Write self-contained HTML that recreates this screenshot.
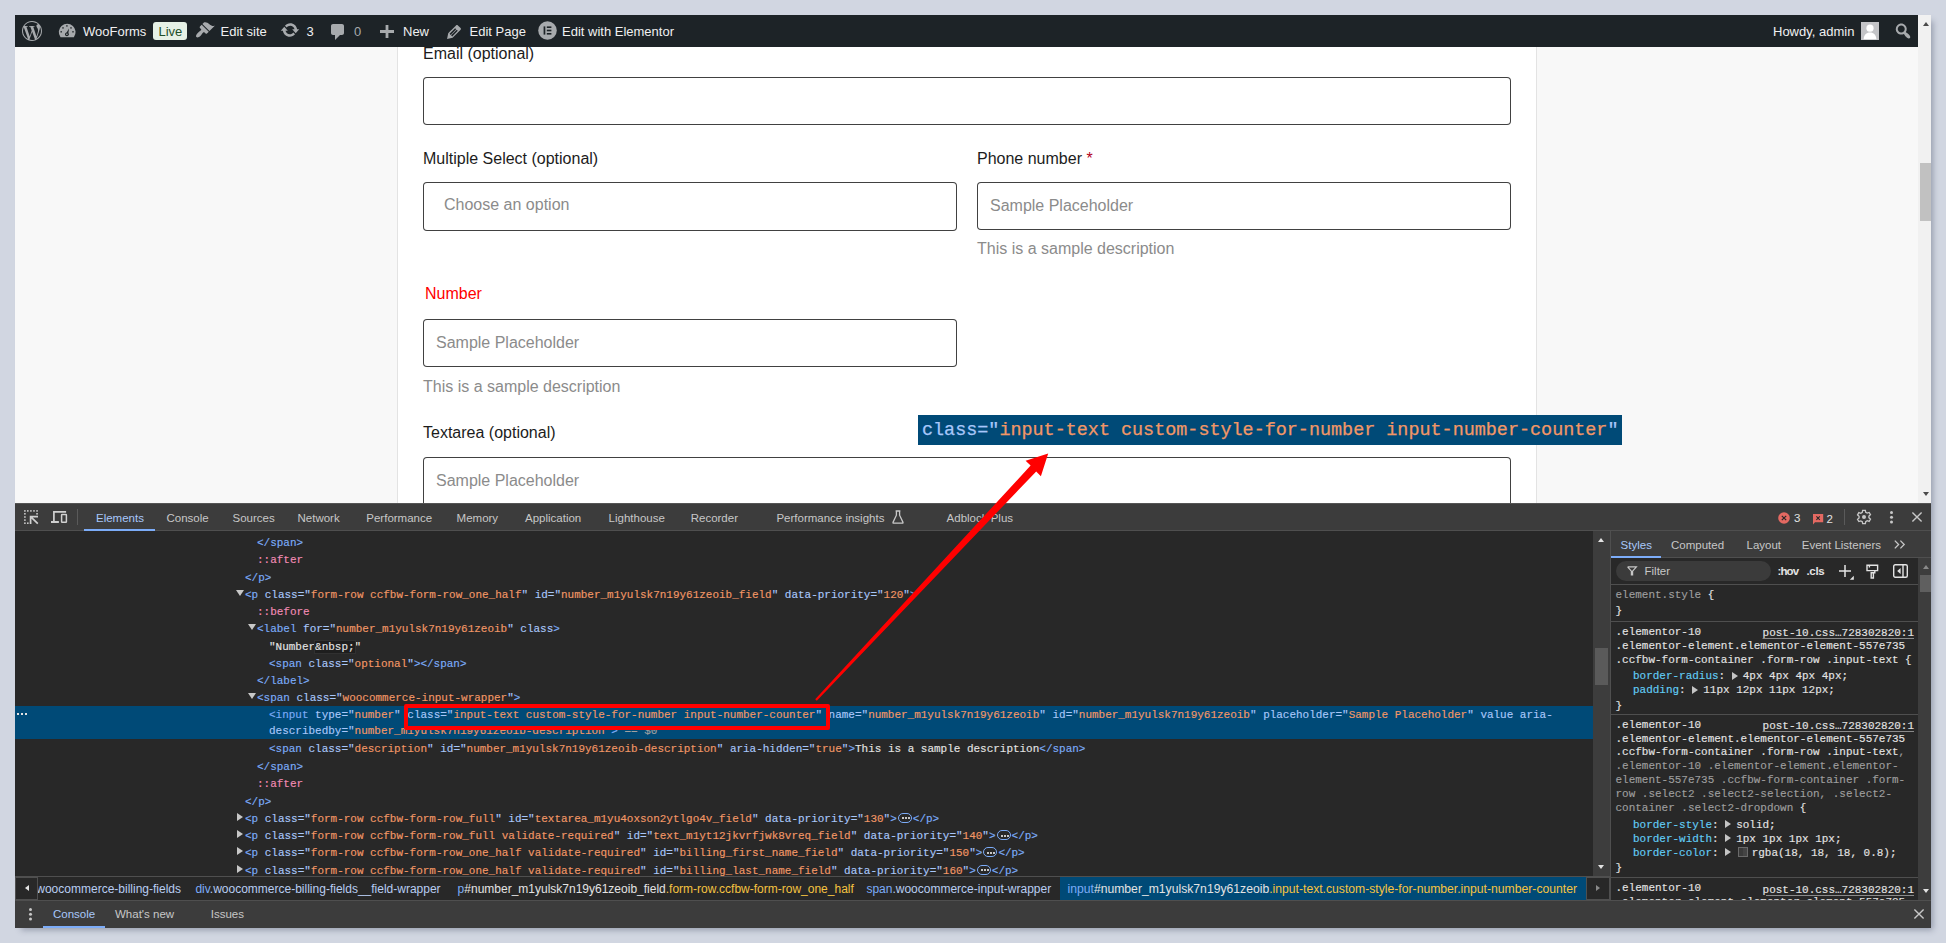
<!DOCTYPE html>
<html><head><meta charset="utf-8">
<style>
*{box-sizing:border-box;margin:0;padding:0}
html,body{width:1946px;height:943px;overflow:hidden;background:#d1d6e1;font-family:"Liberation Sans",sans-serif}
.a{position:absolute}
.t{position:absolute;white-space:pre;line-height:normal}
i{font-style:normal}
svg{position:absolute;overflow:visible}
#win{position:absolute;left:15px;top:15px;width:1916px;height:913px;overflow:hidden;background:#f8f8f8;box-shadow:4px 4px 6px -2px rgba(60,70,95,.4)}
#pg{position:absolute;left:-15px;top:-15px;width:1946px;height:943px}
.sans16{font-size:16px}
.inp{position:absolute;border:1px solid rgba(18,18,18,.8);border-radius:4px;background:#fff}
.lbl{color:#1c1c1c}
.ph{color:#8b8b8b}
.ab{font-size:13px;color:#f0f0f1}
.mono{font-family:"Liberation Mono",monospace;font-size:10.98px;color:#e3e3e3;-webkit-text-stroke:.15px}
.ui{font-size:11.5px;color:#c7c7c7}
.tg{color:#7cacf8}.an{color:#a8c7fa}.av{color:#f29766}.ps{color:#f28bb5}.tx{color:#e3e3e3}.eq{color:#a0a0a0}
.gr{color:#9e9e9e}.pn{color:#62cdf6}.wh{color:#e3e3e3}
.tri{position:absolute;width:0;height:0}
.tri.d{border-left:4px solid transparent;border-right:4px solid transparent;border-top:6px solid #c7c7c7}
.tri.r{border-top:4px solid transparent;border-bottom:4px solid transparent;border-left:6px solid #c7c7c7}
.dots{display:inline-block;position:relative;width:14px;height:10px;border:1px solid #7cacf8;border-radius:5px;vertical-align:-1px;margin:0 1px}
.dots:after{content:"";position:absolute;left:3px;top:3.5px;width:2px;height:2px;background:#c7c7c7;box-shadow:3px 0 0 #c7c7c7,6px 0 0 #c7c7c7}
.ln{position:absolute;background:#4f4f4f}
.stri{position:absolute;width:0;height:0;border-top:4px solid transparent;border-bottom:4px solid transparent;border-left:6px solid #c4c4c4}
</style></head><body>
<div id="win"><div id="pg">

<!-- ============ page area ============ -->
<div class="a" style="left:397px;top:47px;width:1px;height:456px;background:#e3e3e3"></div>
<div class="a" style="left:398px;top:47px;width:1138px;height:456px;background:#fff"></div>
<div class="a" style="left:1536px;top:47px;width:1px;height:456px;background:#e3e3e3"></div>

<div class="t sans16 lbl" style="left:423px;top:44.5px">Email (optional)</div>
<div class="inp" style="left:423px;top:77px;width:1088px;height:48px"></div>

<div class="t sans16 lbl" style="left:423px;top:149.5px">Multiple Select (optional)</div>
<div class="inp" style="left:423px;top:182px;width:534px;height:49px"></div>
<div class="t sans16 ph" style="left:444px;top:195.5px">Choose an option</div>

<div class="t sans16 lbl" style="left:977px;top:149.5px">Phone number <span style="color:#b3001b">*</span></div>
<div class="inp" style="left:977px;top:182px;width:534px;height:48px"></div>
<div class="t sans16 ph" style="left:990px;top:196.5px">Sample Placeholder</div>
<div class="t sans16 ph" style="left:977px;top:240px">This is a sample description</div>

<div class="t sans16" style="left:425px;top:284.5px;color:#f00">Number</div>
<div class="inp" style="left:423px;top:319px;width:534px;height:48px"></div>
<div class="t sans16 ph" style="left:436px;top:334.3px">Sample Placeholder</div>
<div class="t sans16 ph" style="left:423px;top:377.5px">This is a sample description</div>

<div class="t sans16 lbl" style="left:423px;top:423.7px">Textarea (optional)</div>
<div class="inp" style="left:423px;top:457px;width:1088px;height:80px"></div>
<div class="t sans16 ph" style="left:436px;top:471.5px">Sample Placeholder</div>

<!-- page scrollbar -->
<div class="a" style="left:1918px;top:47px;width:13px;height:456px;background:#f1f1f1"></div>
<div class="a" style="left:1920px;top:163px;width:11px;height:58px;background:#c1c1c1"></div>
<div class="tri" style="left:1923px;top:491.8px;border-left:3.6px solid transparent;border-right:3.6px solid transparent;border-top:4.2px solid #4a4a4a"></div>

<!-- ============ admin bar ============ -->
<div class="a" style="left:15px;top:15px;width:1903px;height:32px;background:#1d2327"></div>
<div class="a" style="left:1918px;top:15px;width:13px;height:32px;background:#f1f1f1"></div>
<div class="tri" style="left:1923px;top:22px;border-left:3.6px solid transparent;border-right:3.6px solid transparent;border-bottom:4.3px solid #4a4a4a"></div>
<!-- WP logo -->
<svg style="left:22px;top:21px" width="20" height="20" viewBox="0 0 24 24"><path fill="#a7aaad" d="M21.469 6.825c.84 1.537 1.318 3.3 1.318 5.175 0 3.979-2.156 7.456-5.363 9.325l3.295-9.527c.615-1.54.82-2.771.82-3.864 0-.405-.026-.78-.07-1.11m-7.981.105c.647-.03 1.232-.105 1.232-.105.582-.075.514-.93-.067-.899 0 0-1.755.135-2.88.135-1.064 0-2.85-.15-2.85-.15-.585-.03-.661.855-.075.885 0 0 .54.061 1.125.09l1.68 4.605-2.37 7.08L5.354 6.9c.649-.03 1.234-.1 1.234-.1.585-.075.516-.93-.065-.896 0 0-1.746.138-2.874.138-.2 0-.438-.008-.69-.015C4.911 3.15 8.235 1.215 12 1.215c2.809 0 5.365 1.072 7.286 2.833-.046-.003-.091-.009-.141-.009-1.06 0-1.812.923-1.812 1.914 0 .89.513 1.643 1.06 2.531.411.72.89 1.643.89 2.977 0 .915-.354 1.994-.821 3.479l-1.075 3.585-3.9-11.61.001.014zM12 22.784c-1.059 0-2.081-.153-3.048-.437l3.237-9.406 3.315 9.087c.024.053.05.101.078.149-1.12.393-2.325.609-3.582.609M1.211 12c0-1.564.336-3.05.935-4.39L7.29 21.709C3.694 19.96 1.212 16.271 1.211 12M12 0C5.385 0 0 5.385 0 12s5.385 12 12 12 12-5.385 12-12S18.615 0 12 0"/></svg>
<!-- dashboard gauge -->
<svg style="left:58px;top:23px" width="18" height="15" viewBox="0 0 18 15">
<path fill="#a7aaad" d="M2.53 14.2A8.4 8.4 0 1 1 15.87 14.2Z"/>
<g fill="#1d2327"><rect x="8.2" y="2.2" width="1.4" height="1.4"/><rect x="4.3" y="4.2" width="1.4" height="1.4"/><rect x="12.3" y="4.2" width="1.4" height="1.4"/><rect x="2.5" y="8.1" width="1.4" height="1.4"/><rect x="14.3" y="8.1" width="1.4" height="1.4"/>
<path d="M11 5.4L10.2 11.6 7.7 11z"/><circle cx="8.9" cy="11.3" r="1.9"/></g><circle cx="8.9" cy="11.3" r=".8" fill="#a7aaad"/>
</svg>
<div class="t ab" style="left:83px;top:23.7px">WooForms</div>
<div class="a" style="left:153px;top:22px;width:34px;height:18px;background:#e6f1e6;border-radius:3px"></div>
<div class="t ab" style="left:158.5px;top:23.7px;color:#1f4f2a">Live</div>
<!-- brush -->
<svg style="left:194.6px;top:20.4px" width="20" height="20" viewBox="0 0 20 20"><path fill="#a7aaad" d="M14.48 11.06L7.41 3.99l1.5-1.5c.5-.56 2.3-.47 3.51.32 1.21.8 1.43 1.28 2.91 2.1 1.18.64 2.45 1.26 4.450.85zm-.71.71L6.7 4.7 4.930 6.47c-.39.39-.39 1.02 0 1.42l1.06 1.060c.39.39.39 1.03 0 1.42-.6.6-1.43 1.11-2.21 1.69-.35.26-.7.53-1.010.84C1.43 14.23.4 16.08 1.4 17.07c.99 1 2.84-.03 4.18-1.36.31-.31.58-.66.85-1.02.57-.78 1.08-1.61 1.69-2.21.39-.39 1.02-.39 1.41 0l1.06 1.06c.39.39 1.02.39 1.41 0z"/></svg>
<div class="t ab" style="left:220.5px;top:23.7px">Edit site</div>
<!-- update -->
<svg style="left:280.4px;top:20.2px" width="20" height="20" viewBox="0 0 20 20"><path fill="#a7aaad" d="M10.2 3.28c3.53 0 6.43 2.61 6.92 6h2.08l-3.5 4-3.5-4h2.32c-.45-1.970-2.21-3.45-4.32-3.45-1.45 0-2.73.71-3.54 1.78L4.95 5.66C6.23 4.2 8.11 3.28 10.2 3.28zm-.4 13.44c-3.52 0-6.43-2.61-6.92-6H.8l3.5-4c1.17 1.33 2.33 2.67 3.5 4H5.48c.45 1.97 2.21 3.45 4.32 3.45 1.45 0 2.73-.71 3.54-1.78l1.71 1.95c-1.28 1.46-3.15 2.38-5.25 2.38z"/></svg>
<div class="t ab" style="left:306.5px;top:23.7px">3</div>
<!-- comment -->
<svg style="left:328px;top:22.2px" width="20" height="20" viewBox="0 0 20 20"><path fill="#a7aaad" d="M5 2h9c1.1 0 2 .9 2 2v7c0 1.1-.9 2-2 2h-2l-5 5v-5H5c-1.1 0-2-.9-2-2V4c0-1.1.9-2 2-2z"/></svg>
<div class="t ab" style="left:354px;top:23.7px;color:#a7aaad">0</div>
<!-- plus -->
<svg style="left:380px;top:24.5px" width="14" height="13" viewBox="0 0 14 13"><path fill="#a7aaad" d="M5.6 0h2.8v5.1H14v2.8H8.4V13H5.6V7.9H0V5.1h5.6z"/></svg>
<div class="t ab" style="left:403px;top:23.7px">New</div>
<!-- pencil -->
<svg style="left:443.6px;top:21.6px" width="20" height="20" viewBox="0 0 20 20"><path fill="#a7aaad" d="M13.89 3.39l2.71 2.72c.46.46.42 1.24.03 1.64l-8.01 8.02-5.56 1.16 1.16-5.58s7.6-7.63 7.99-8.03c.39-.39 1.22-.39 1.68.07zm-2.73 2.79l-5.59 5.61 1.11 1.11 5.54-5.65zm-2.97 8.23l5.58-5.6-1.07-1.08-5.59 5.6z"/></svg>
<div class="t ab" style="left:469.5px;top:23.7px">Edit Page</div>
<!-- elementor -->
<svg style="left:537.5px;top:21.2px" width="19" height="19" viewBox="0 0 19 19"><circle cx="9.5" cy="9.5" r="9.3" fill="#a7aaad"/><g fill="#1d2327"><rect x="5.6" y="5.4" width="1.7" height="8.2"/><rect x="8.8" y="5.4" width="4.6" height="1.6"/><rect x="8.8" y="8.7" width="4.6" height="1.6"/><rect x="8.8" y="12" width="4.6" height="1.6"/></g></svg>
<div class="t ab" style="left:562px;top:23.7px">Edit with Elementor</div>

<div class="t ab" style="left:1773px;top:23.7px">Howdy, admin</div>
<!-- avatar -->
<svg style="left:1861px;top:22px" width="18" height="18" viewBox="0 0 18 18"><rect width="18" height="18" fill="#c3c4c7"/><circle cx="9" cy="6.2" r="3.6" fill="#fff"/><path fill="#fff" d="M2.6 17.2c.2-4.2 2.8-6.8 6.4-6.8s6.2 2.6 6.4 6.8z"/></svg>
<!-- search -->
<svg style="left:1892.5px;top:20.8px" width="20" height="20" viewBox="0 0 20 20"><path fill="#a7aaad" d="M12.14 4.18c1.87 1.87 2.11 4.75.72 6.89.12.1.22.21.36.31.2.16.47.36.81.59.34.24.56.39.66.47.42.31.73.57.94.78.32.32.6.65.84 1 .25.35.44.69.59 1.04.14.35.21.68.18 1-.02.32-.14.59-.36.81s-.49.34-.81.36c-.31.02-.65-.04-.99-.19-.35-.14-.7-.34-1.040-.59-.35-.24-.68-.52-1-.84-.21-.21-.47-.52-.77-.93-.1-.13-.25-.35-.47-.66-.22-.32-.4-.57-.56-.78-.16-.2-.29-.35-.44-.5-2.07 1.09-4.69.76-6.44-.98-2.14-2.15-2.14-5.64 0-7.78 2.15-2.15 5.63-2.15 7.78 0zm-1.41 6.36c1.36-1.37 1.36-3.58 0-4.95-1.37-1.37-3.59-1.37-4.95 0-1.37 1.37-1.37 3.58 0 4.95 1.36 1.37 3.58 1.37 4.95 0z"/></svg>


<!-- ============ callout ============ -->
<div class="a" style="left:918px;top:415px;width:704px;height:30px;background:#004a77"></div>
<div class="t" style="left:922px;top:419.5px;font-family:'Liberation Mono',monospace;font-size:18.43px;-webkit-text-stroke:.25px"><i class="an">class="</i><i class="av">input-text custom-style-for-number input-number-counter</i><i class="an">"</i></div>

<!-- ============ devtools ============ -->
<div class="a" style="left:15px;top:503px;width:1916px;height:425px;background:#282828"></div>
<!-- main tab bar -->
<div class="a" style="left:15px;top:503px;width:1916px;height:27px;background:#3c3c3c"></div>
<div class="ln" style="left:15px;top:530px;width:1916px;height:1px"></div>
<div class="a" style="left:15px;top:503px;width:1916px;height:1px;background:#555"></div>
<!-- inspect icon -->
<svg style="left:23px;top:509px" width="17" height="17" viewBox="0 0 17 17"><g fill="#c7c7c7"><rect x="1.10" y="1.10" width="1.6" height="1.6"/><rect x="4.00" y="1.10" width="1.6" height="1.6"/><rect x="7.10" y="1.10" width="1.6" height="1.6"/><rect x="10.20" y="1.10" width="1.6" height="1.6"/><rect x="13.25" y="1.10" width="1.6" height="1.6"/><rect x="1.10" y="4.00" width="1.6" height="1.6"/><rect x="1.10" y="7.20" width="1.6" height="1.6"/><rect x="1.10" y="10.30" width="1.6" height="1.6"/><rect x="1.10" y="13.40" width="1.6" height="1.6"/><rect x="13.25" y="4.00" width="1.6" height="1.6"/><rect x="4.00" y="13.40" width="1.6" height="1.6"/></g>
<path fill="none" stroke="#d0d0d0" stroke-width="1.7" d="M7.6 14.9V7.6H15M7.6 7.6L14.8 14.6"/></svg>
<!-- device icon -->
<svg style="left:50px;top:510px" width="18" height="15" viewBox="0 0 18 15">
<path fill="none" stroke="#d0d0d0" stroke-width="1.7" d="M3.9 11.2V1.8H16.1"/><path fill="none" stroke="#d0d0d0" stroke-width="2" d="M1 12H8.9"/>
<rect x="11.6" y="4.6" width="4.8" height="7.7" rx=".5" fill="none" stroke="#d0d0d0" stroke-width="1.5"/>
</svg>
<div class="a" style="left:77px;top:509px;width:1px;height:16px;background:#5a5a5a"></div>
<div class="t ui" style="left:96px;top:511.6px;color:#a8c7fa">Elements</div>
<div class="a" style="left:84px;top:529px;width:71px;height:2px;background:#7cacf8"></div>
<div class="t ui" style="left:166.5px;top:511.6px">Console</div>
<div class="t ui" style="left:232.5px;top:511.6px">Sources</div>
<div class="t ui" style="left:297.5px;top:511.6px">Network</div>
<div class="t ui" style="left:366.3px;top:511.6px">Performance</div>
<div class="t ui" style="left:456.6px;top:511.6px">Memory</div>
<div class="t ui" style="left:525px;top:511.6px">Application</div>
<div class="t ui" style="left:608.6px;top:511.6px">Lighthouse</div>
<div class="t ui" style="left:690.7px;top:511.6px">Recorder</div>
<div class="t ui" style="left:776.4px;top:511.6px">Performance insights</div>
<svg style="left:892px;top:510px" width="12" height="14" viewBox="0 0 12 14"><path fill="none" stroke="#c7c7c7" stroke-width="1.3" d="M3.6 1h4.8M4.4 1v4.2L1 12.4c-.2.4 0 .8.5.8h9c.5 0 .7-.4.5-.8L7.6 5.2V1"/></svg>
<div class="t ui" style="left:946.6px;top:511.6px">Adblock Plus</div>
<!-- right icons -->
<svg style="left:1778px;top:512px" width="12" height="12" viewBox="0 0 12 12"><circle cx="6" cy="6" r="5.8" fill="#e46962"/><path stroke="#282828" stroke-width="1.2" d="M3.8 3.8l4.4 4.4M8.2 3.8l-4.4 4.4"/></svg>
<div class="t ui" style="left:1794px;top:511.6px;color:#e3e3e3">3</div>
<svg style="left:1813px;top:514px" width="11" height="11" viewBox="0 0 11 11"><path fill="#e46962" d="M0 0h10.2v8.2H2L0 10.4z"/><path stroke="#282828" stroke-width="1.1" d="M3.4 2.4l3.4 3.4M6.8 2.4L3.4 5.8"/></svg>
<div class="t ui" style="left:1826.5px;top:513.2px;color:#e3e3e3">2</div>
<div class="a" style="left:1844px;top:509px;width:1px;height:16px;background:#5a5a5a"></div>
<!-- gear -->
<svg style="left:1855.5px;top:509px" width="16" height="16" viewBox="0 0 24 24"><path fill="none" stroke="#c7c7c7" stroke-width="2" d="M10 2h4l.6 3 2.2 1.2 2.9-1 2 3.4-2.3 2v2.6l2.3 2-2 3.4-2.9-1L14.6 19l-.6 3h-4l-.6-3-2.2-1.2-2.9 1-2-3.4 2.3-2v-2.6l-2.3-2 2-3.4 2.9 1L9.4 5z"/><circle cx="12" cy="12" r="3" fill="#c7c7c7"/></svg>
<g></g>
<div class="a" style="left:1889.5px;top:511px;width:3px;height:3px;border-radius:2px;background:#c7c7c7;box-shadow:0 4.8px 0 #c7c7c7,0 9.6px 0 #c7c7c7"></div>
<svg style="left:1912px;top:512px" width="10" height="10" viewBox="0 0 10 10"><path stroke="#c7c7c7" stroke-width="1.4" d="M0.4 0.4l9.2 9.2M9.6 0.4L0.4 9.6"/></svg>

<!-- elements scrollbar -->
<div class="a" style="left:1593px;top:531px;width:17px;height:345px;background:#3d3d3d"></div>
<div class="tri" style="left:1598px;top:538px;border-left:3.6px solid transparent;border-right:3.6px solid transparent;border-bottom:4.4px solid #e3e3e3"></div>
<div class="a" style="left:1595px;top:648px;width:13px;height:37px;background:#5a5a5a"></div>
<div class="tri" style="left:1598px;top:865px;border-left:3.6px solid transparent;border-right:3.6px solid transparent;border-top:4.4px solid #e3e3e3"></div>
<div class="ln" style="left:1610px;top:531px;width:1px;height:369px"></div>

<!-- selected row -->
<div class="a" style="left:15px;top:706px;width:1578px;height:33px;background:#004a77"></div>
<div class="a" style="left:17px;top:713px;width:2px;height:2px;background:#e3e3e3;box-shadow:4px 0 0 #e3e3e3,8px 0 0 #e3e3e3"></div>
<!-- styles sidebar tabs -->
<div class="a" style="left:1611px;top:531px;width:320px;height:26px;background:#3c3c3c"></div>
<div class="ln" style="left:1611px;top:557px;width:320px;height:1px"></div>
<div class="t ui" style="left:1620.6px;top:538.6px;color:#a8c7fa">Styles</div>
<div class="a" style="left:1611px;top:556px;width:50px;height:2px;background:#7cacf8"></div>
<div class="t ui" style="left:1671px;top:538.6px">Computed</div>
<div class="t ui" style="left:1746.5px;top:538.6px">Layout</div>
<div class="t ui" style="left:1801.8px;top:538.6px">Event Listeners</div>
<svg style="left:1894px;top:540px" width="12" height="9" viewBox="0 0 12 9"><path fill="none" stroke="#c7c7c7" stroke-width="1.3" d="M0.8 0.6l3.8 3.9-3.8 3.9M6.4 0.6l3.8 3.9-3.8 3.9"/></svg>
<!-- toolbar -->
<div class="a" style="left:1616px;top:561px;width:155px;height:20px;border-radius:10px;background:#3b3b3b"></div>
<svg style="left:1627px;top:566px" width="10" height="10" viewBox="0 0 10 10"><path fill="none" stroke="#c7c7c7" stroke-width="1.2" d="M0.6 0.8h8.8L5.6 5.2v4.4M4.4 9.6V5.2L0.6 0.8"/></svg>
<div class="t ui" style="left:1644.5px;top:565.3px">Filter</div>
<div class="t ui" style="left:1777.5px;top:564.6px;color:#e3e3e3;font-weight:bold;letter-spacing:-.9px">:hov</div>
<div class="t ui" style="left:1806.4px;top:564.6px;color:#e3e3e3;font-weight:bold;letter-spacing:-.3px">.cls</div>
<svg style="left:1838px;top:564px" width="16" height="16" viewBox="0 0 16 16"><path stroke="#e3e3e3" stroke-width="1.5" d="M7 1v12M1 7h12"/><path fill="#e3e3e3" d="M15.8 11.8v4h-4z"/></svg>
<svg style="left:1866px;top:564px" width="13" height="15" viewBox="0 0 13 15"><path fill="none" stroke="#e3e3e3" stroke-width="1.4" d="M1 1.2h10.6v5.4H1zM3.4 1.2v2.4M8.8 6.6v2.2H5.2v5.2h2.2V8.8"/></svg>
<svg style="left:1893px;top:564px" width="15" height="14" viewBox="0 0 15 14"><rect x=".7" y=".7" width="13.6" height="12.6" rx="1.5" fill="none" stroke="#e3e3e3" stroke-width="1.4"/><path stroke="#e3e3e3" stroke-width="1.4" d="M10 .7v12.6"/><path fill="#e3e3e3" d="M7.6 4v6L4.2 7z"/></svg>
<div class="ln" style="left:1611px;top:584px;width:307px;height:1px"></div>
<!-- styles scrollbar -->
<div class="a" style="left:1918px;top:558px;width:13px;height:342px;background:#3d3d3d"></div>
<div class="tri" style="left:1923px;top:565px;border-left:3.6px solid transparent;border-right:3.6px solid transparent;border-bottom:4.2px solid #8a8a8a"></div>
<div class="a" style="left:1920px;top:575px;width:11px;height:17px;background:#5f5f5f"></div>
<div class="tri" style="left:1922.5px;top:888.8px;border-left:3.8px solid transparent;border-right:3.8px solid transparent;border-top:4.6px solid #e3e3e3"></div>

<!-- styles content -->
<div class="a" style="left:1611px;top:585px;width:307px;height:315px;overflow:hidden"><div class="a" style="left:-1611px;top:-585px;width:1946px;height:943px">
<div class="t mono" style="left:1615.5px;top:588.66px"><i class="gr">element.style</i> {</div>
<div class="t mono" style="left:1615.5px;top:604.76px">}</div>
<div class="ln" style="left:1611px;top:621px;width:307px;height:1px"></div>
<div class="t mono" style="left:1615.5px;top:625.56px">.elementor-10</div>
<div class="t mono" style="left:1762.6px;top:627.06px;text-decoration:underline;text-underline-offset:2px;text-decoration-color:#8a8a8a">post-10.css…728302820:1</div>
<div class="t mono" style="left:1615.5px;top:639.66px">.elementor-element.elementor-element-557e735</div>
<div class="t mono" style="left:1615.5px;top:653.86px">.ccfbw-form-container .form-row .input-text {</div>
<div class="t mono" style="left:1633px;top:670.06px"><i class="pn">border-radius</i>:<i style="display:inline-block;width:17.6px"></i>4px 4px 4px 4px;</div>
<div class="stri" style="left:1732px;top:671.5px"></div>
<div class="t mono" style="left:1633px;top:684.06px"><i class="pn">padding</i>:<i style="display:inline-block;width:17.6px"></i>11px 12px 11px 12px;</div>
<div class="stri" style="left:1692px;top:685.5px"></div>
<div class="t mono" style="left:1615.5px;top:699.56px">}</div>
<div class="ln" style="left:1611px;top:714px;width:307px;height:1px"></div>
<div class="t mono" style="left:1615.5px;top:718.86px">.elementor-10</div>
<div class="t mono" style="left:1762.6px;top:720.36px;text-decoration:underline;text-underline-offset:2px;text-decoration-color:#8a8a8a">post-10.css…728302820:1</div>
<div class="t mono" style="left:1615.5px;top:732.56px">.elementor-element.elementor-element-557e735</div>
<div class="t mono" style="left:1615.5px;top:746.26px">.ccfbw-form-container .form-row .input-text<i class="gr">,</i></div>
<div class="t mono gr" style="left:1615.5px;top:760.26px">.elementor-10 .elementor-element.elementor-</div>
<div class="t mono gr" style="left:1615.5px;top:774.26px">element-557e735 .ccfbw-form-container .form-</div>
<div class="t mono gr" style="left:1615.5px;top:788.36px">row .select2 .select2-selection, .select2-</div>
<div class="t mono" style="left:1615.5px;top:802.26px"><i class="gr">container .select2-dropdown</i> {</div>
<div class="t mono" style="left:1633px;top:818.66px"><i class="pn">border-style</i>:<i style="display:inline-block;width:17.6px"></i>solid;</div>
<div class="stri" style="left:1725px;top:820px"></div>
<div class="t mono" style="left:1633px;top:832.56px"><i class="pn">border-width</i>:<i style="display:inline-block;width:17.6px"></i>1px 1px 1px 1px;</div>
<div class="stri" style="left:1725px;top:834px"></div>
<div class="t mono" style="left:1633px;top:846.66px"><i class="pn">border-color</i>:<i style="display:inline-block;width:17.6px"></i><i style="display:inline-block;width:15.5px"></i>rgba(18, 18, 18, 0.8);</div>
<div class="stri" style="left:1725px;top:848px"></div>
<div class="a" style="left:1738px;top:847px;width:10px;height:10px;border:1px solid #6a6a6a;background:linear-gradient(90deg,#3a3a3a 50%,#444 50%)"></div>
<div class="t mono" style="left:1615.5px;top:862.16px">}</div>
<div class="ln" style="left:1611px;top:877px;width:307px;height:1px"></div>
<div class="t mono" style="left:1615.5px;top:882.06px">.elementor-10</div>
<div class="t mono" style="left:1762.6px;top:883.56px;text-decoration:underline;text-underline-offset:2px;text-decoration-color:#8a8a8a">post-10.css…728302820:1</div>
<div class="t mono" style="left:1615.5px;top:896.16px">.elementor-element.elementor-element-557e735</div>
</div></div>

<!-- elements content -->
<div class="a" style="left:15px;top:531px;width:1578px;height:345px;overflow:hidden"><div class="a" style="left:-15px;top:-531px;width:1946px;height:943px">
<div class="t mono" style="left:257px;top:537.16px"><i class="tg">&lt;/span&gt;</i></div>
<div class="t mono" style="left:257px;top:554.39px"><i class="ps">::after</i></div>
<div class="t mono" style="left:245px;top:571.62px"><i class="tg">&lt;/p&gt;</i></div>
<div class="tri d" style="left:235.5px;top:589.5px"></div>
<div class="t mono" style="left:245px;top:588.85px"><i class="tg">&lt;p</i> <i class="an">class</i><i class="an">="</i><i class="av">form-row ccfbw-form-row_one_half</i><i class="an">"</i> <i class="an">id</i><i class="an">="</i><i class="av">number_m1yulsk7n19y61zeoib_field</i><i class="an">"</i> <i class="an">data-priority</i><i class="an">="</i><i class="av">120</i><i class="an">"</i><i class="tg">&gt;</i></div>
<div class="t mono" style="left:257px;top:606.08px"><i class="ps">::before</i></div>
<div class="tri d" style="left:247.5px;top:623.9px"></div>
<div class="t mono" style="left:257px;top:623.31px"><i class="tg">&lt;label</i> <i class="an">for</i><i class="an">="</i><i class="av">number_m1yulsk7n19y61zeoib</i><i class="an">"</i> <i class="an">class</i><i class="tg">&gt;</i></div>
<div class="t mono" style="left:269px;top:640.54px"><i class="tx">"Number</i><i class="tx" style="background:#1e1e1e;outline:1px solid #303030">&amp;nbsp;</i><i class="tx">"</i></div>
<div class="t mono" style="left:269px;top:657.77px"><i class="tg">&lt;span</i> <i class="an">class</i><i class="an">="</i><i class="av">optional</i><i class="an">"</i><i class="tg">&gt;&lt;/span&gt;</i></div>
<div class="t mono" style="left:257px;top:675.00px"><i class="tg">&lt;/label&gt;</i></div>
<div class="tri d" style="left:247.5px;top:692.9px"></div>
<div class="t mono" style="left:257px;top:692.23px"><i class="tg">&lt;span</i> <i class="an">class</i><i class="an">="</i><i class="av">woocommerce-input-wrapper</i><i class="an">"</i><i class="tg">&gt;</i></div>
<div class="t mono" style="left:269px;top:709.46px"><i class="tg">&lt;input</i> <i class="an">type</i><i class="an">="</i><i class="av">number</i><i class="an">"</i> <i class="an">class</i><i class="an">="</i><i class="av">input-text custom-style-for-number input-number-counter</i><i class="an">"</i> <i class="an">name</i><i class="an">="</i><i class="av">number_m1yulsk7n19y61zeoib</i><i class="an">"</i> <i class="an">id</i><i class="an">="</i><i class="av">number_m1yulsk7n19y61zeoib</i><i class="an">"</i> <i class="an">placeholder</i><i class="an">="</i><i class="av">Sample Placeholder</i><i class="an">"</i> <i class="an">value aria-</i></div>
<div class="t mono" style="left:269px;top:725.49px"><i class="an">describedby="</i><i class="av">number_m1yulsk7n19y61zeoib-description</i><i class="an">"</i><i class="tg">&gt;</i><i class="eq"> == $0</i></div>
<div class="t mono" style="left:269px;top:742.72px"><i class="tg">&lt;span</i> <i class="an">class</i><i class="an">="</i><i class="av">description</i><i class="an">"</i> <i class="an">id</i><i class="an">="</i><i class="av">number_m1yulsk7n19y61zeoib-description</i><i class="an">"</i> <i class="an">aria-hidden</i><i class="an">="</i><i class="av">true</i><i class="an">"</i><i class="tg">&gt;</i><i class="tx">This is a sample description</i><i class="tg">&lt;/span&gt;</i></div>
<div class="t mono" style="left:257px;top:761.15px"><i class="tg">&lt;/span&gt;</i></div>
<div class="t mono" style="left:257px;top:778.38px"><i class="ps">::after</i></div>
<div class="t mono" style="left:245px;top:795.61px"><i class="tg">&lt;/p&gt;</i></div>
<div class="tri r" style="left:236.5px;top:813.0px"></div>
<div class="t mono" style="left:245px;top:812.84px"><i class="tg">&lt;p</i> <i class="an">class</i><i class="an">="</i><i class="av">form-row ccfbw-form-row_full</i><i class="an">"</i> <i class="an">id</i><i class="an">="</i><i class="av">textarea_m1yu4oxson2ytlgo4v_field</i><i class="an">"</i> <i class="an">data-priority</i><i class="an">="</i><i class="av">130</i><i class="an">"</i><i class="tg">&gt;</i><b class="dots"></b><i class="tg">&lt;/p&gt;</i></div>
<div class="tri r" style="left:236.5px;top:830.2px"></div>
<div class="t mono" style="left:245px;top:830.07px"><i class="tg">&lt;p</i> <i class="an">class</i><i class="an">="</i><i class="av">form-row ccfbw-form-row_full validate-required</i><i class="an">"</i> <i class="an">id</i><i class="an">="</i><i class="av">text_m1yt12jkvrfjwk8vreq_field</i><i class="an">"</i> <i class="an">data-priority</i><i class="an">="</i><i class="av">140</i><i class="an">"</i><i class="tg">&gt;</i><b class="dots"></b><i class="tg">&lt;/p&gt;</i></div>
<div class="tri r" style="left:236.5px;top:847.4px"></div>
<div class="t mono" style="left:245px;top:847.30px"><i class="tg">&lt;p</i> <i class="an">class</i><i class="an">="</i><i class="av">form-row ccfbw-form-row_one_half validate-required</i><i class="an">"</i> <i class="an">id</i><i class="an">="</i><i class="av">billing_first_name_field</i><i class="an">"</i> <i class="an">data-priority</i><i class="an">="</i><i class="av">150</i><i class="an">"</i><i class="tg">&gt;</i><b class="dots"></b><i class="tg">&lt;/p&gt;</i></div>
<div class="tri r" style="left:236.5px;top:864.7px"></div>
<div class="t mono" style="left:245px;top:864.53px"><i class="tg">&lt;p</i> <i class="an">class</i><i class="an">="</i><i class="av">form-row ccfbw-form-row_one_half validate-required</i><i class="an">"</i> <i class="an">id</i><i class="an">="</i><i class="av">billing_last_name_field</i><i class="an">"</i> <i class="an">data-priority</i><i class="an">="</i><i class="av">160</i><i class="an">"</i><i class="tg">&gt;</i><b class="dots"></b><i class="tg">&lt;/p&gt;</i></div>
</div></div>

<!-- breadcrumbs -->
<div class="ln" style="left:15px;top:876px;width:1595px;height:1px"></div>
<div class="a" style="left:38px;top:877px;width:1548px;height:23px;overflow:hidden"><div class="a" style="left:-38px;top:-877px;width:1946px;height:943px">
<div class="t ui" style="font-size:12px;left:181px;top:882.2px;transform:translateX(-100%);color:#b8cdf2">woocommerce-billing-fields</div>
<div class="t ui" style="font-size:12px;left:195.4px;top:882.2px"><i class="tg">div</i><i style="color:#b8cdf2">.woocommerce-billing-fields__field-wrapper</i></div>
<div class="t ui" style="font-size:12px;left:457.6px;top:882.2px"><i class="tg">p</i><i class="tx">#number_m1yulsk7n19y61zeoib_field</i><i style="color:#f5c341">.form-row.ccfbw-form-row_one_half</i></div>
<div class="t ui" style="font-size:12px;left:866.4px;top:882.2px"><i class="tg">span</i><i style="color:#b8cdf2">.woocommerce-input-wrapper</i></div>
<div class="a" style="left:1060px;top:877px;width:526px;height:23px;background:#004a77"></div>
<div class="t ui" style="font-size:12.18px;left:1067.5px;top:882.1px"><i class="tg">input</i><i class="tx">#number_m1yulsk7n19y61zeoib</i><i style="color:#f5c341">.input-text.custom-style-for-number.input-number-counter</i></div>
</div></div>
<div class="a" style="left:15px;top:877px;width:23px;height:23px;border:1px solid #4f4f4f;background:#282828"></div>
<div class="tri" style="left:24.5px;top:884.8px;border-top:3.2px solid transparent;border-bottom:3.2px solid transparent;border-right:4.6px solid #e3e3e3"></div>
<div class="a" style="left:1586px;top:877px;width:24px;height:23px;border:1px solid #4f4f4f;background:#282828"></div>
<div class="tri" style="left:1596px;top:884.8px;border-top:3.2px solid transparent;border-bottom:3.2px solid transparent;border-left:4.6px solid #8a8a8a"></div>
<div class="ln" style="left:15px;top:900px;width:1916px;height:1px"></div>

<!-- drawer -->
<div class="a" style="left:15px;top:901px;width:1916px;height:27px;background:#3c3c3c"></div>
<div class="a" style="left:29.3px;top:907.6px;width:3px;height:3px;border-radius:2px;background:#c7c7c7;box-shadow:0 4.8px 0 #c7c7c7,0 9.6px 0 #c7c7c7"></div>
<div class="t ui" style="left:53px;top:908.4px;color:#a8c7fa">Console</div>
<div class="a" style="left:43px;top:926px;width:62px;height:2px;background:#7cacf8"></div>
<div class="t ui" style="left:115px;top:908.4px">What's new</div>
<div class="t ui" style="left:210.7px;top:908.4px">Issues</div>
<svg style="left:1914px;top:909px" width="10" height="10" viewBox="0 0 10 10"><path stroke="#c7c7c7" stroke-width="1.4" d="M0.4 0.4l9.2 9.2M9.6 0.4L0.4 9.6"/></svg>


<!-- ============ annotation ============ -->
<!-- red box -->
<div class="a" style="left:404px;top:704px;width:426px;height:26px;border:4px solid #ff0000;border-radius:2px"></div>
<!-- arrow -->
<svg style="left:0;top:0" width="1946" height="943" viewBox="0 0 1946 943"><path fill="#ff0000" d="M815.2 699.2L1030.6 465.6 1025.6 460.8 1048.2 453.4 1040.9 476.3 1036.2 471.4 816.8 700.8z"/></svg>


</div></div>
</body></html>
